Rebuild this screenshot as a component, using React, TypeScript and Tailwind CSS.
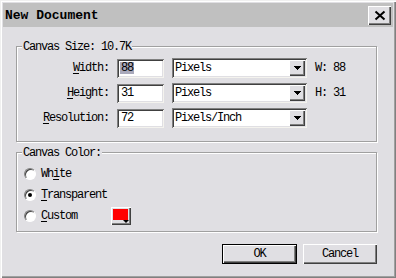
import React from "react";

const raised =
  "shadow-[inset_1px_1px_0_#ffffff,inset_-1px_-1px_0_#404040,inset_-2px_-2px_0_#808080]";
const sunken =
  "shadow-[inset_1px_1px_0_#808080,inset_-1px_-1px_0_#f4f3ee,inset_2px_2px_0_#404040,inset_-2px_-2px_0_#e0dfe3]";
const etched = "border border-[#a0a0a0] shadow-[1px_1px_0_#ffffff,inset_1px_1px_0_#ffffff]";

const Arrow = () => (
  <svg width="7" height="5" viewBox="0 0 7 5">
    <path d="M0 0h7v1h-1v1h-1v1h-1v1h-1v-1h-1v-1h-1v-1h-1z" fill="#000" />
  </svg>
);

const Select = ({ value }: { value: string }) => (
  <div className={`w-[135px] h-[20px] bg-white flex items-center justify-between pl-[3px] pr-[2px] ${sunken}`}>
    <span>{value}</span>
    <div className={`w-[16px] h-[16px] bg-[#e0dfe3] flex items-center justify-center ${raised}`}>
      <Arrow />
    </div>
  </div>
);

const Row = ({
  k,
  rest,
  value,
  unit,
  info,
  selected,
}: {
  k: string;
  rest: string;
  value: string;
  unit: string;
  info?: string;
  selected?: boolean;
}) => (
  <div className="flex items-center h-[20px]">
    <div className="w-[92px] text-right">
      <span className="underline underline-offset-2">{k}</span>
      {rest}
    </div>
    <div className={`ml-[8px] w-[47px] h-[19px] bg-white flex items-center pl-[3px] ${sunken}`}>
      <span className={selected ? "bg-[#a9a9bb] px-px" : "px-px"}>{value}</span>
    </div>
    <div className="ml-[8px]">
      <Select value={unit} />
    </div>
    {info && <span className="ml-[8px]">{info}</span>}
  </div>
);

const Radio = ({ checked, children }: { checked?: boolean; children: React.ReactNode }) => (
  <div className="flex items-center gap-[5px]">
    <div className="w-[12px] h-[12px] rounded-full bg-white border border-t-[#808080] border-l-[#808080] border-b-white border-r-white flex items-center justify-center shadow-[inset_1px_1px_0_#404040]">
      {checked && <div className="w-[4px] h-[4px] rounded-full bg-black" />}
    </div>
    {children}
  </div>
);

export default function App() {
  return (
    <div className="w-[396px] h-[278px] bg-[#e0dfe3] text-black font-['Liberation_Mono',monospace] text-[12px] tracking-[-1.2px] leading-none p-[3px] flex flex-col shadow-[inset_1px_1px_0_#f0f0f0,inset_2px_2px_0_#ffffff,inset_-1px_-1px_0_#808080,inset_-2px_-2px_0_#a0a0a0]">
      <div className="h-[24px] bg-[#c0c0c0] flex items-center justify-between pl-[2px] pr-[2px]">
        <span className="text-[13px] font-bold tracking-normal">New Document</span>
        <button className={`w-[23px] h-[19px] bg-[#e0dfe3] flex items-center justify-center ${raised}`}>
          <svg width="12" height="11" viewBox="0 0 12 11">
            <path d="M1.5 1.5l9 8M10.5 1.5l-9 8" stroke="#000" strokeWidth="2" />
          </svg>
        </button>
      </div>

      <div className="pl-[13px] pt-[19px] flex flex-col">
        <div className={`relative w-[361px] h-[96px] ${etched} pt-[11px] flex flex-col gap-[5px]`}>
          <span className="absolute -top-[6px] left-[5px] bg-[#e0dfe3] px-px">Canvas Size: 10.7K</span>
          <Row k="W" rest="idth:" value="88" unit="Pixels" info="W: 88" selected />
          <Row k="H" rest="eight:" value="31" unit="Pixels" info="H: 31" />
          <Row k="R" rest="esolution:" value="72" unit="Pixels/Inch" />
        </div>

        <div className={`relative mt-[10px] w-[361px] h-[80px] ${etched} pt-[10px] pl-[7px] flex flex-col`}>
          <span className="absolute -top-[6px] left-[5px] bg-[#e0dfe3] px-px">Canvas Color:</span>
          <div className="h-[21px] flex items-center">
            <Radio>
              <span>
                Wh<span className="underline underline-offset-2">i</span>te
              </span>
            </Radio>
          </div>
          <div className="h-[21px] flex items-center">
            <Radio checked>
              <span>
                <span className="underline underline-offset-2">T</span>ransparent
              </span>
            </Radio>
          </div>
          <div className="h-[21px] flex items-center">
            <Radio>
              <span className="w-[70px]">
                <span className="underline underline-offset-2">C</span>ustom
              </span>
            </Radio>
            <div className={`relative w-[20px] h-[18px] bg-[#e0dfe3] p-[2px] ${raised}`}>
              <div className="w-[15px] h-[11px] bg-[#ff0000]" />
              <div className="absolute right-[2px] bottom-[2px] w-0 h-0 border-l-[3px] border-r-[3px] border-t-[3px] border-l-transparent border-r-transparent border-t-black" />
            </div>
          </div>
        </div>

        <div className="w-[361px] mt-[12px] flex justify-end gap-[6px]">
          <button className="w-[75px] h-[20px] border border-black bg-[#e0dfe3] flex items-center justify-center shadow-[inset_1px_1px_0_#ffffff,inset_-1px_-1px_0_#404040,inset_-2px_-2px_0_#808080]">
            OK
          </button>
          <button className={`w-[74px] h-[20px] bg-[#e0dfe3] flex items-center justify-center ${raised}`}>
            Cancel
          </button>
        </div>
      </div>
    </div>
  );
}
